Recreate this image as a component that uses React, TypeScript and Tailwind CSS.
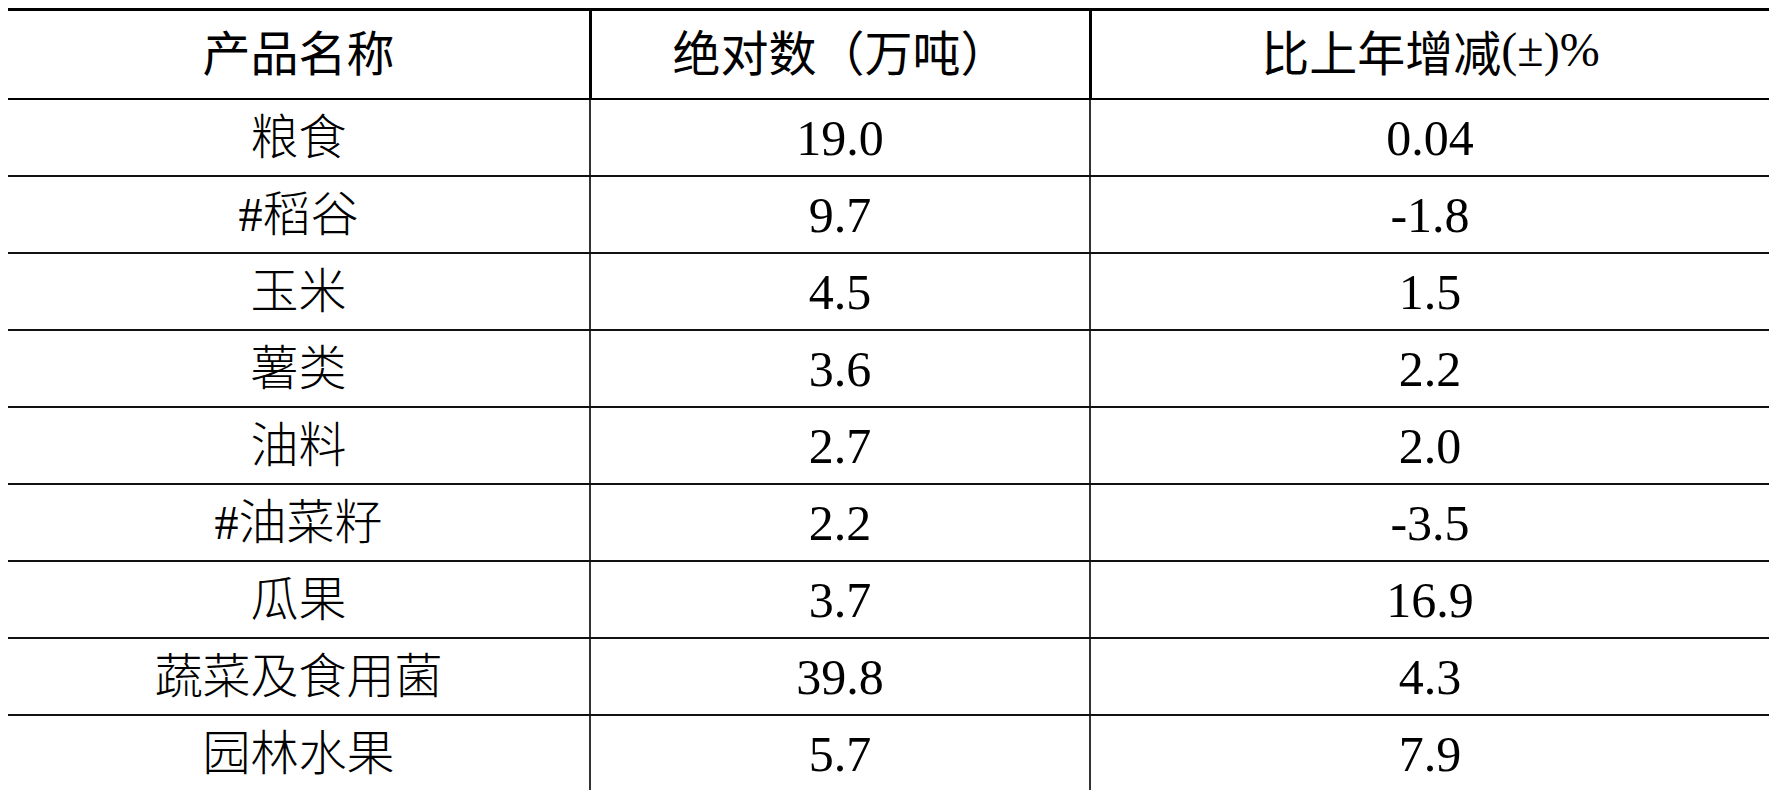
const rows = [
  { name: "粮食", amount: "19.0", change: "0.04" },
  { name: "#稻谷", amount: "9.7", change: "-1.8" },
  { name: "玉米", amount: "4.5", change: "1.5" },
  { name: "薯类", amount: "3.6", change: "2.2" },
  { name: "油料", amount: "2.7", change: "2.0" },
  { name: "#油菜籽", amount: "2.2", change: "-3.5" },
  { name: "瓜果", amount: "3.7", change: "16.9" },
  { name: "蔬菜及食用菌", amount: "39.8", change: "4.3" },
  { name: "园林水果", amount: "5.7", change: "7.9" },
];

const heiFont = "font-['Noto_Sans_CJK_SC',sans-serif]";
const songFont = "font-['Liberation_Serif','Noto_Sans_CJK_SC',serif]";
const numFont = "font-['Liberation_Serif',serif]";

const App = () => {
  return (
    <div className="min-h-screen bg-white pl-[8px] pt-[8px] text-black">
      <div className="w-[1761px]">
        {/* header */}
        <div className="grid h-[92px] grid-cols-[581px_500px_680px] border-t-[3px] border-b-2 border-black">
          <div className={`flex items-center justify-center pb-[10px] text-[48px] font-normal ${heiFont}`}>
            产品名称
          </div>
          <div className={`flex items-center justify-center border-l-[3px] border-black pb-[10px] text-[48px] font-normal ${heiFont}`}>
            绝对数（万吨）
          </div>
          <div className="flex items-center justify-center border-l-[3px] border-black pb-[10px]">
            <span className={`text-[48px] font-normal ${heiFont}`}>比上年增减</span>
            <span className={`text-[48px] font-normal ${numFont}`}>(±)%</span>
          </div>
        </div>

        {rows.map((row) => (
          <div
            key={row.name}
            className="grid h-[77px] grid-cols-[581px_500px_680px] border-b-2 border-[#111]"
          >
            <div className="flex items-center justify-center">
              <span className={`text-[48px] font-light leading-none ${songFont}`}>{row.name}</span>
            </div>
            <div className="flex items-center justify-center border-l-2 border-[#333]">
              <span className={`text-[50px] leading-none ${numFont}`}>{row.amount}</span>
            </div>
            <div className="flex items-center justify-center border-l-2 border-[#333]">
              <span className={`text-[50px] leading-none ${numFont}`}>{row.change}</span>
            </div>
          </div>
        ))}
      </div>
    </div>
  );
};

export default App;
